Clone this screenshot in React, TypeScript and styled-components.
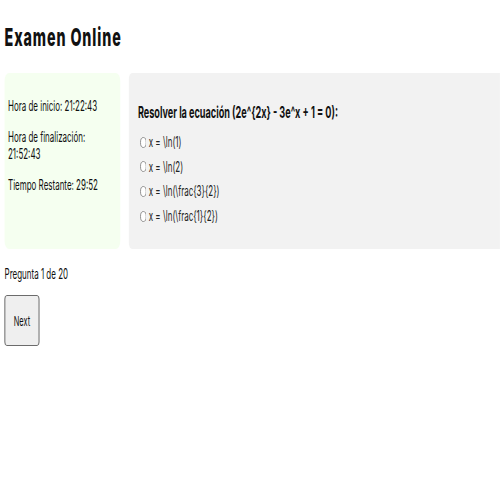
import React from "react";
import styled, { createGlobalStyle } from "styled-components";

const GlobalStyle = createGlobalStyle`
  html, body {
    margin: 0;
    padding: 0;
    overflow: hidden;
    background: #ffffff;
  }
  body {
    font-family: Inter, "Noto Sans", Roboto, sans-serif;
    color: #111111;
  }
`;

const Stage = styled.div`
  width: 877px;
  box-sizing: border-box;
  padding-left: 8px;
  transform: scaleX(0.57);
  transform-origin: 0 0;
`;

const Title = styled.h1`
  margin: 22px 0 21px;
  font-size: 25px;
  line-height: 30px;
  font-weight: 800;
  letter-spacing: 1.6px;
`;

const Layout = styled.div`
  display: flex;
  gap: 15px;
  height: 176px;
`;

const Sidebar = styled.aside`
  width: 203px;
  box-sizing: border-box;
  padding: 10px 6px;
  background: #f5fff0;
  border-radius: 8px;
`;

const InfoLine = styled.p`
  margin: 14px 0;
  font-size: 14px;
  line-height: 17px;
`;

const Main = styled.section`
  flex: 1;
  box-sizing: border-box;
  padding: 10px 16px;
  background: #f2f2f2;
  border-radius: 6px 0 0 6px;
`;

const Question = styled.h2`
  margin: 20px 0 12px;
  font-size: 16px;
  line-height: 19px;
  font-weight: 700;
`;

const Options = styled.div`
  display: flex;
  flex-direction: column;
  gap: 8.7px;
`;

const Option = styled.label`
  display: flex;
  align-items: center;
  height: 16px;
  font-size: 14px;
  line-height: 16px;
  color: #222;
`;

const Radio = styled.input`
  width: 11px;
  height: 11px;
  margin: 0 4px 0 4px;
`;

const Counter = styled.p`
  margin: 16px 0 13px;
  font-size: 14px;
  line-height: 17px;
`;

const NextButton = styled.button`
  width: 61px;
  height: 51px;
  font-family: Inter, "Noto Sans", sans-serif;
  font-size: 13px;
  color: #111;
  background: #efefef;
  border: 1px solid #444;
  border-radius: 4px;
`;

const options = [
  "x = \\ln(1)",
  "x = \\ln(2)",
  "x = \\ln(\\frac{3}{2})",
  "x = \\ln(\\frac{1}{2})",
];

export default function App() {
  return (
    <>
      <GlobalStyle />
      <Stage>
        <Title>Examen Online</Title>
        <Layout>
          <Sidebar>
            <InfoLine>Hora de inicio: 21:22:43</InfoLine>
            <InfoLine>Hora de finalización: 21:52:43</InfoLine>
            <InfoLine>Tiempo Restante: 29:52</InfoLine>
          </Sidebar>
          <Main>
            <Question>Resolver la ecuación (2e^{"{2x}"} - 3e^x + 1 = 0):</Question>
            <Options>
              {options.map((o) => (
                <Option key={o}>
                  <Radio type="radio" name="answer" />
                  {o}
                </Option>
              ))}
            </Options>
          </Main>
        </Layout>
        <Counter>Pregunta 1 de 20</Counter>
        <NextButton>Next</NextButton>
      </Stage>
    </>
  );
}
